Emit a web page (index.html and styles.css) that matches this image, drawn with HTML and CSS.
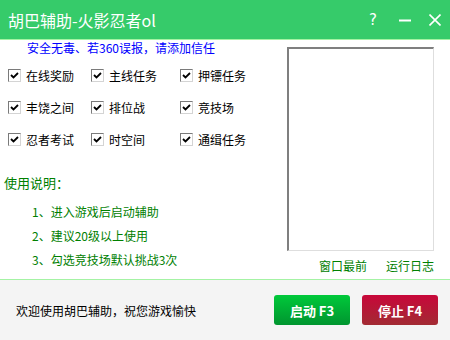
FILE: index.html
```html
<!DOCTYPE html>
<html lang="zh-CN">

<head>
    <meta charset="UTF-8">
    <title>胡巴辅助-火影忍者ol</title>
    <link rel="stylesheet" href="styles.css">
</head>

<body>
    <div class="window">
        <!-- Title bar -->
        <div class="titlebar">
            <span class="title">胡巴辅助-火影忍者ol</span>
            <div class="controls">
                <span class="ctl help">?</span>
                <span class="ctl">
                    <svg width="12" height="12" viewBox="0 0 12 12"><path d="M0 6.5h12" stroke="#fff" stroke-width="2"/></svg>
                </span>
                <span class="ctl">
                    <svg width="12" height="12" viewBox="0 0 12 12"><path d="M0.5 0.5l11 11M11.5 0.5l-11 11" stroke="#fff" stroke-width="1.6"/></svg>
                </span>
            </div>
        </div>

        <div class="main">
            <div class="left">
                <p class="notice">安全无毒、若360误报，请添加信任</p>

                <div class="tasks">
                    <label class="task"><span class="box"></span>在线奖励</label>
                    <label class="task"><span class="box"></span>主线任务</label>
                    <label class="task"><span class="box"></span>押镖任务</label>
                    <label class="task"><span class="box"></span>丰饶之间</label>
                    <label class="task"><span class="box"></span>排位战</label>
                    <label class="task"><span class="box"></span>竞技场</label>
                    <label class="task"><span class="box"></span>忍者考试</label>
                    <label class="task"><span class="box"></span>时空间</label>
                    <label class="task"><span class="box"></span>通缉任务</label>
                </div>

                <h2 class="help-title">使用说明：</h2>
                <ul class="help-list">
                    <li>1、进入游戏后启动辅助</li>
                    <li>2、建议20级以上使用</li>
                    <li>3、勾选竞技场默认挑战3次</li>
                </ul>
            </div>

            <div class="right">
                <div class="log"></div>
                <div class="links">
                    <span>窗口最前</span>
                    <span>运行日志</span>
                </div>
            </div>
        </div>

        <div class="footer">
            <span class="welcome">欢迎使用胡巴辅助，祝您游戏愉快</span>
            <div class="buttons">
                <button class="btn start">启动 F3</button>
                <button class="btn stop">停止 F4</button>
            </div>
        </div>
    </div>
</body>

</html>
```

FILE: styles.css
```css
body {
    margin: 0;
    padding: 0;
    font-family: "Noto Sans CJK SC", "DejaVu Sans", sans-serif;
    font-size: 12px;
    background-color: #fff;
}

.window {
    width: 450px;
    height: 340px;
    display: flex;
    flex-direction: column;
}

.titlebar {
    height: 39px;
    flex-shrink: 0;
    background-color: #36cb6a;
    border-bottom: 1px solid #a4f3a4;
    display: flex;
    align-items: center;
    justify-content: space-between;
    padding-left: 8px;
    color: #fff;
}

.title {
    font-size: 16px;
    line-height: 20px;
}

.controls {
    display: flex;
    height: 100%;
}

.ctl {
    width: 30px;
    display: flex;
    align-items: center;
    justify-content: center;
}

.help {
    font-family: "DejaVu Sans", sans-serif;
    font-size: 15px;
    padding-right: 2px;
}

.main {
    height: 239px;
    display: flex;
}

.left {
    width: 287px;
}

.notice {
    margin: 0 0 0 27px;
    line-height: 16px;
    color: #0000ff;
}

.tasks {
    display: grid;
    grid-template-columns: 83px 89px auto;
    row-gap: 12px;
    margin-top: 9px;
    padding-left: 8px;
}

.task {
    display: flex;
    align-items: center;
    height: 20px;
    color: #000;
}

.box {
    width: 11px;
    height: 11px;
    margin-right: 5px;
    border: 1px solid #7a7a7a;
    border-right-color: #d4d4d4;
    border-bottom-color: #d4d4d4;
    background: #fff url("data:image/svg+xml,%3Csvg xmlns='http://www.w3.org/2000/svg' width='11' height='11'%3E%3Cpath d='M2 5l2.5 2.5L9 3' fill='none' stroke='%23000' stroke-width='1.8'/%3E%3C/svg%3E") no-repeat center;
}

.help-title {
    margin: 24px 0 0 4px;
    font-size: 13px;
    font-weight: normal;
    line-height: 20px;
    color: #008000;
}

.help-list {
    list-style: none;
    margin: 7px 0 0 32px;
    padding: 0;
    color: #008000;
}

.help-list li {
    line-height: 24px;
}

.right {
    width: 147px;
}

.log {
    margin-top: 7px;
    height: 201px;
    background: #fff;
    border-left: 2px solid #7f7f7f;
    border-top: 2px solid #7f7f7f;
    border-right: 1px solid #dedede;
    border-bottom: 1px solid #dedede;
}

.links {
    display: flex;
    justify-content: flex-end;
    gap: 19px;
    margin-top: 7px;
    line-height: 16px;
    color: #008000;
}

.footer {
    flex: 1;
    background-color: #f4f4f4;
    border-top: 1px solid #a4f3a4;
    display: flex;
    align-items: center;
    justify-content: space-between;
    padding: 0 12px 0 16px;
}

.welcome {
    color: #000;
}

.buttons {
    display: flex;
    gap: 12px;
}

.btn {
    width: 76px;
    height: 30px;
    border: none;
    border-radius: 3px;
    color: #fff;
    font-family: "Noto Sans CJK SC", "DejaVu Sans", sans-serif;
    font-size: 13px;
    font-weight: bold;
    cursor: pointer;
}

.start {
    background: linear-gradient(#00c93a, #00952f);
}

.stop {
    background: linear-gradient(#c8073a, #a22b33);
}
```
